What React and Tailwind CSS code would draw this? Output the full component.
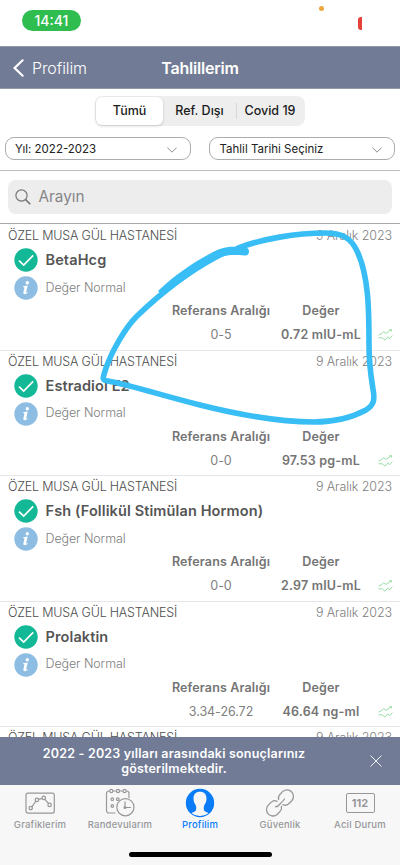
import React, { useState } from 'react';

const RESULTS = [
  { id: 1, name: 'BetaHcg', range: '0-5', value: '0.72 mIU-mL' },
  { id: 2, name: 'Estradiol E2', range: '0-0', value: '97.53 pg-mL' },
  { id: 3, name: 'Fsh (Follikül Stimülan Hormon)', range: '0-0', value: '2.97 mIU-mL' },
  { id: 4, name: 'Prolaktin', range: '3.34-26.72', value: '46.64 ng-ml' },
];

const ChevronDown = () => (
  <svg className="w-[10px] h-[6px]" viewBox="0 0 10 6" fill="none" stroke="#8b8e92" strokeWidth="1">
    <path d="M0.4 0.6 5 5.2 9.6 0.6" />
  </svg>
);

const CheckBadge = () => (
  <svg className="w-6 h-6 shrink-0" viewBox="0 0 24 24" fill="none">
    <circle cx="12" cy="12" r="11.7" fill="#13b896" />
    <path d="M5 12.6 9.7 17 19.2 7.4" stroke="#fff" strokeWidth="1.7" />
  </svg>
);

const InfoBadge = () => (
  <svg className="w-6 h-6 shrink-0" viewBox="0 0 24 24">
    <circle cx="12" cy="12" r="11.7" fill="#8dbde2" />
    <circle cx="13.3" cy="6.8" r="1.7" fill="#fff" />
    <path d="M9.2 10.2 13.7 9.5 12.1 16.4c-.1.6.4.6 1.4-.3l.3.5c-1.7 2.1-5 2.4-4.4-.3l1.100-4.800-1.300-.5z" fill="#fff" />
  </svg>
);

const TrendIcon = () => (
  <svg className="w-[15px] h-3" viewBox="0 0 15 12" fill="none" stroke="#7fd48f" strokeWidth="0.8">
    <path d="M0.5 6.2 3.5 4.6 5.8 2.8 8.2 4.400 13.200 0.700M11.400 0.700H13.400V2.400" />
    <path d="M0.500 8.800H4.300L7 11.200 9.800 7.800 11.400 9.800 14.400 6.600" />
  </svg>
);

const ChartTab = () => (
  <svg className="w-[30px] h-[30px]" viewBox="0 0 30 30" fill="none" stroke="#98989a" strokeWidth="1.2">
    <rect x="1" y="5.1" width="28.3" height="20" rx="2" />
    <path d="M6.8 18.9 11 13M13.4 11.4l3.8-1.1M19.9 11.3 23.6 15.7" />
    <circle cx="5.7" cy="20.1" r="1.7" />
    <circle cx="11.9" cy="11.9" r="1.7" />
    <circle cx="18.8" cy="9.9" r="1.7" />
    <circle cx="24.6" cy="16.9" r="1.7" />
  </svg>
);

const CalendarTab = () => (
  <svg className="w-[30px] h-[30px]" viewBox="0 0 30 30" fill="none" stroke="#98989a" strokeWidth="1.2">
    <path d="M10.5 25H4a2.5 2.5 0 0 1-2.5-2.5V5.5A2.5 2.5 0 0 1 4 3h.7M8 3h3.4M14.6 3H18M21.2 3h.3A2.5 2.5 0 0 1 24 5.500V10" />
    <circle cx="6.3" cy="3" r="1.6" />
    <circle cx="13" cy="3" r="1.6" />
    <circle cx="19.6" cy="3" r="1.6" />
    <circle cx="7.3" cy="11.2" r="1.3" />
    <circle cx="12.8" cy="11.2" r="1.3" />
    <circle cx="7.3" cy="18" r="1.3" />
    <circle cx="20.4" cy="19.2" r="8.6" />
    <path d="M20 13.5v6h6" />
    <circle cx="20" cy="19.5" r="1" />
  </svg>
);

const ProfileTab = () => (
  <svg className="w-[30px] h-[30px]" viewBox="0 0 30 30">
    <circle cx="15" cy="15" r="14.2" fill="#0a7cf8" />
    <path d="M15 3.800c-4.200 0-6.500 2.700-6.500 6.700 0 3 .9 5 2.300 6.700.6 1.500.7 4.800-.4 5.800-1.300 1-2.600 1.300-3.800 2.200A13.200 13.200 0 0 0 15 28a13.200 13.200 0 0 0 8.400-2.800c-1.200-.9-2.500-1.200-3.800-2.200-1.100-1-1-4.300-.4-5.800 1.400-1.700 2.300-3.700 2.300-6.700 0-4-2.300-6.700-6.500-6.700z" fill="#f7f7f7" />
  </svg>
);

const LinkTab = () => (
  <svg className="w-[30px] h-[30px]" viewBox="0 0 30 30" fill="none" stroke="#98989a" strokeWidth="1.3" strokeLinecap="round">
    <path d="M13.6 11.4c-.5-2 0-3.5 1.3-4.9l2.9-3.1a6.5 6.5 0 0 1 9.2 9.1l-3 3c-1.7 1.7-4.3 2-6.1 1.1" />
    <path d="M16.4 18.5c.5 2 0 3.5-1.3 4.9l-2.9 3.1A6.5 6.5 0 0 1 3 17.4l3-3c1.7-1.7 4.3-2 6.1-1.1" />
    <path d="M10.6 18.7c2 .5 3-1.2 4.4-2.7s3.5-3.3 4.5-5" />
  </svg>
);

const EmergencyTab = () => (
  <span className="w-[29px] h-5 my-[5px] rounded-[2px] border border-[#98989a] flex items-center justify-center text-[11px] font-bold">
    112
  </span>
);

const TABS = [
  { label: 'Grafiklerim', icon: ChartTab },
  { label: 'Randevularım', icon: CalendarTab },
  { label: 'Profilim', icon: ProfileTab, active: true },
  { label: 'Güvenlik', icon: LinkTab },
  { label: 'Acil Durum', icon: EmergencyTab },
];

const ResultHeading = () => (
  <div className="flex justify-between px-2 h-4 shrink-0 items-center text-[12.5px] font-light text-[#808080]">
    <span className="text-[#4e4e4e] tracking-[-0.2px]">ÖZEL MUSA GÜL HASTANESİ</span>
    <span className="tracking-[-0.1px]">9 Aralık 2023</span>
  </div>
);

function ResultRow({ result }) {
  return (
    <div className="h-[125.5px] shrink-0 border-b border-[#e6e6e8] pt-[3.5px] text-[#808080]">
      <ResultHeading />
      <div className="flex items-center gap-[7.5px] pl-3.5 mt-[3.5px] h-6">
        <CheckBadge />
        <span className="text-[14.5px] font-semibold tracking-[0.12px] text-[#555]">{result.name}</span>
      </div>
      <div className="flex items-center gap-[7.5px] pl-3.5 mt-1 h-6">
        <InfoBadge />
        <span className="text-[12.5px] font-light tracking-[-0.1px]">Değer Normal</span>
      </div>
      <div className="grid grid-cols-[100px_100px_1fr] pl-[171px] mt-[3px] text-[12.5px] text-center whitespace-nowrap">
        <span className="h-4 leading-4 font-semibold tracking-[0.15px] text-[#747474]">Referans Aralığı</span>
        <span className="h-4 leading-4 font-semibold tracking-[0.15px] text-[#747474]">Değer</span>
        <span />
        <span className="mt-2 h-4 leading-4 tracking-[-0.05px]">{result.range}</span>
        <span className="mt-2 h-4 leading-4 font-semibold tracking-[0.2px] text-[#747474]">{result.value}</span>
        <span className="mt-2 h-4 pl-[7px] flex items-center"><TrendIcon /></span>
      </div>
    </div>
  );
}

export default function App() {
  const [filter, setFilter] = useState('Tümü');
  const segment = (name) =>
    `h-7 rounded-md ${filter === name ? 'bg-white shadow-[0_1px_3px_rgba(0,0,0,0.18)]' : ''}`;

  return (
    <div className="relative w-[400px] h-[865px] flex flex-col overflow-hidden bg-white font-['Inter',sans-serif]">
      {/* Status bar */}
      <div className="relative h-[46px] shrink-0 pl-[22px] pt-[9.5px]">
        <div className="w-[59px] h-[21.5px] rounded-full bg-[#30bd50] text-white text-[14px] font-medium flex items-center justify-center">14:41</div>
        <span className="absolute left-[319px] top-[6px] w-[5px] h-[5px] rounded-full bg-[#eba63c]" />
        <span className="absolute left-[358px] top-[17px] w-[4px] h-[13px] rounded-l-[3px] bg-[#e5413a]" />
      </div>

      {/* Header */}
      <div className="h-[43px] shrink-0 grid grid-cols-3 items-center bg-[#717b95] border-y border-[#9298a8] text-white">
        <button className="flex items-center gap-[8px] pl-[13px] text-[16px] font-light tracking-[-0.1px]">
          <svg className="w-[11px] h-[18px]" viewBox="0 0 11 18" fill="none" stroke="#fff" strokeWidth="2.2" strokeLinecap="round">
            <path d="M9.6 1.3 1.6 9l8 7.7" />
          </svg>
          Profilim
        </button>
        <h1 className="text-center text-[16px] font-semibold tracking-[-0.2px]">Tahlillerim</h1>
      </div>

      {/* Filters */}
      <div className="h-[82px] shrink-0 border-b border-[#b9bec3] pt-[7px]">
        <div className="ml-[95px] w-[210px] h-[30px] p-px rounded-lg bg-[#eeeeef] grid grid-cols-[67px_73px_68px] text-[12.5px] font-medium text-[#1b1b1b]">
          <button className={segment('Tümü')} onClick={() => setFilter('Tümü')}>Tümü</button>
          <button className={segment('Ref. Dışı')} onClick={() => setFilter('Ref. Dışı')}>Ref. Dışı</button>
          <button className={`relative ${segment('Covid 19')}`} onClick={() => setFilter('Covid 19')}>
            <span className="absolute left-0 top-1.5 h-4 w-px bg-[#d6d6d8]" />
            Covid 19
          </button>
        </div>
        <div className="flex justify-between mt-[11px] px-[5px] text-[11.5px] text-[#222]">
          <button className="w-[186px] h-[23px] rounded-[9px] border border-[#a9adb0] flex items-center justify-between pl-[9px] pr-[13px] pt-0.5">
            Yıl: 2022-2023
            <ChevronDown />
          </button>
          <button className="w-[186px] h-[23px] rounded-[9px] border border-[#a9adb0] flex items-center justify-between pl-[9.5px] pr-[12px] pt-0.5">
            Tahlil Tarihi Seçiniz
            <ChevronDown />
          </button>
        </div>
      </div>

      {/* Search */}
      <div className="h-[53px] shrink-0 px-2 pt-[9px] border-b border-[#a9a9ab]">
        <div className="h-[34px] rounded-lg bg-[#ededed] flex items-center gap-[7.5px] pl-[7px] text-[15.3px] text-[#858587]">
          <svg className="w-4 h-4" viewBox="0 0 16 16" fill="none" stroke="#77777a" strokeWidth="1.2">
            <circle cx="6.5" cy="6.5" r="5.6" />
            <path d="M10.6 10.6 15.3 15.3" strokeWidth="1.6" />
          </svg>
          Arayın
        </div>
      </div>

      {/* Results */}
      <div className="flex-1 min-h-0 overflow-hidden flex flex-col pt-px">
        {RESULTS.map((r) => (
          <ResultRow key={r.id} result={r} />
        ))}
        <div className="pt-[3.5px]">
          <ResultHeading />
        </div>
      </div>

      {/* Notice */}
      <div className="h-12 shrink-0 flex items-center bg-[#717b95] text-white pl-[10px] pr-[18px]">
        <p className="flex-1 text-center text-[12.5px] leading-[15px] font-semibold tracking-[0.2px]">
          2022 - 2023 yılları arasındaki sonuçlarınız
          <br />
          gösterilmektedir.
        </p>
        <svg className="w-3 h-3 ml-8" viewBox="0 0 12 12" fill="none" stroke="#fff" strokeWidth="0.9">
          <path d="M0.5 0.5 11.5 11.5M11.5 0.5 0.5 11.5" />
        </svg>
      </div>

      {/* Tab bar */}
      <div className="h-20 shrink-0 bg-[#f7f7f7] flex flex-col items-center">
        <div className="w-full grid grid-cols-5 pt-[3px]">
          {TABS.map(({ label, icon: Icon, active }) => (
            <div key={label} className={`flex flex-col items-center ${active ? 'text-[#0a7cf8]' : 'text-[#98989a]'}`}>
              <Icon />
              <span className="mt-px text-[9.5px] leading-3 font-medium tracking-[0.2px] whitespace-nowrap">{label}</span>
            </div>
          ))}
        </div>
        <div className="mt-[21px] w-[143px] h-[5px] rounded-full bg-black" />
      </div>

      {/* Marker stroke drawn over the list */}
      <svg className="absolute left-0 top-0 w-[400px] h-[865px] pointer-events-none" viewBox="0 0 400 865" fill="none" stroke="#38bdf5" strokeLinecap="round" strokeLinejoin="round">
        <path d="M245 251.500C232 250 227 251 216 257C186 273 158 296 137 316C125 328 112 351 106 368C102 380 102 380 108 381C130 385 160 395 200 405C240 415 280 422 314 422C335 422 353 417 366 410C374 405 375 400 373 389C371 376 369 366 369 345C369 312 369 276 357 251C351 238 342 233 325 233C296 233 262 239 238 248" strokeWidth="5.6" />
        <path d="M245 247.500C232 246 224 246 213 252C194 262 176 274 158 291L162 295C176 284 196 270 214 260C226 254 232 255 245 255.500A4 4 0 0 0 245 247.500Z" fill="#38bdf5" stroke="none" />
      </svg>
    </div>
  );
}
